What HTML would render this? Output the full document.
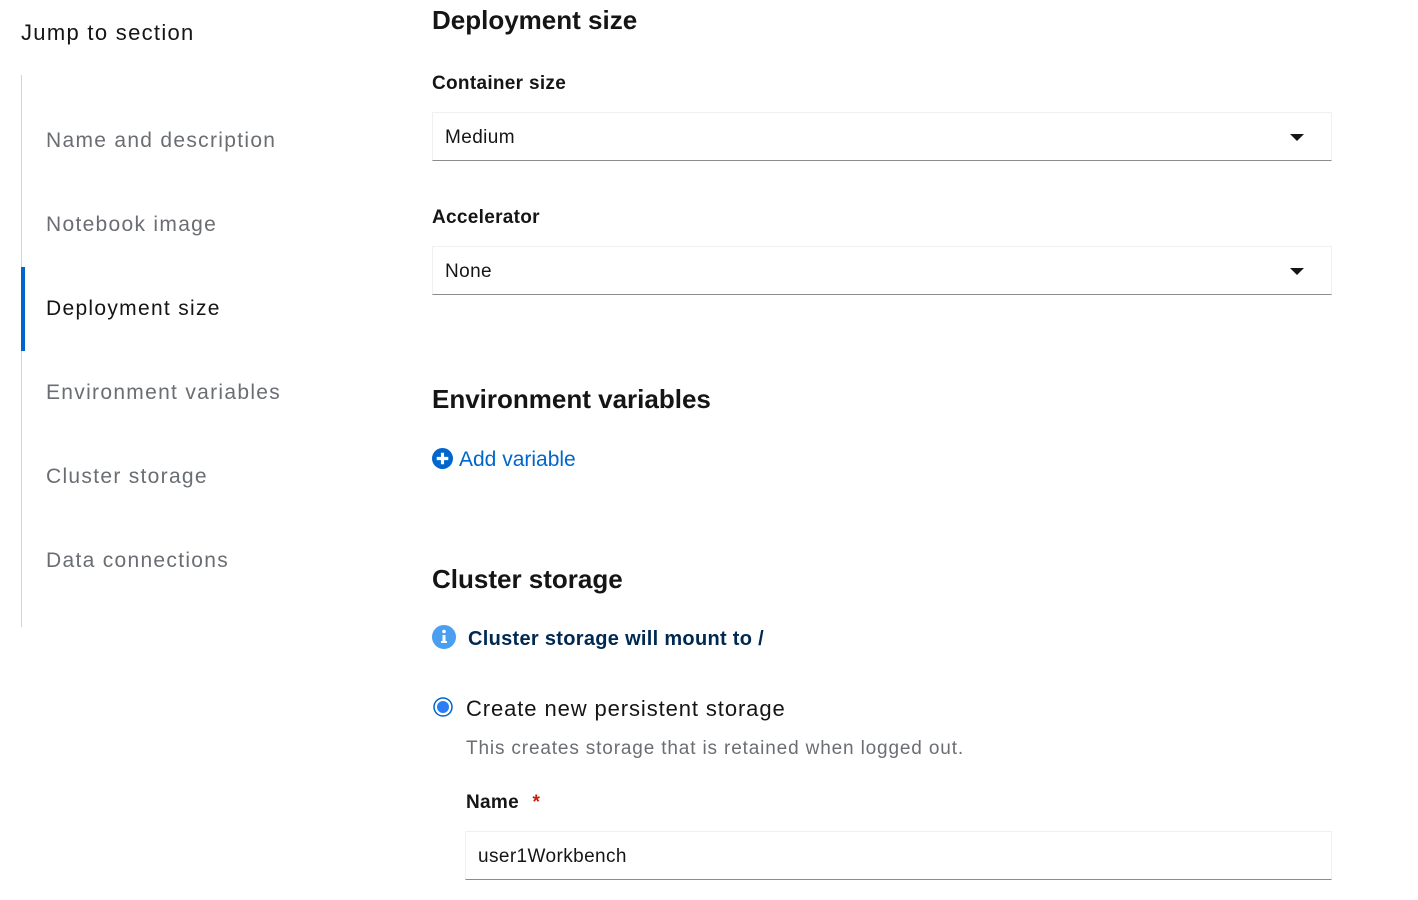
<!DOCTYPE html>
<html><head><style>
*{margin:0;padding:0;box-sizing:border-box}
body{width:1418px;height:900px;background:#fff;font-family:"Liberation Sans",sans-serif;color:#151515;position:relative;overflow:hidden}
.a{position:absolute;white-space:nowrap}
.nav{font-size:21px;color:#6a6e73;letter-spacing:1.3px}
.h2{font-size:26px;font-weight:bold}
.lbl{font-size:19px;font-weight:bold;letter-spacing:0.3px}
.sel{position:absolute;left:432px;width:900px;height:49px;border:1px solid #f0f0f0;border-bottom:1px solid #8a8d90;font-size:19px;padding:14px 0 0 12px;letter-spacing:0.4px}
.car{position:absolute;right:27px;top:21px;width:0;height:0;border-left:7px solid transparent;border-right:7px solid transparent;border-top:7px solid #151515}
</style></head><body>
<div class="a" style="left:21px;top:20px;font-size:22px;letter-spacing:1.3px">Jump to section</div>
<div class="a" style="left:21px;top:75px;width:1px;height:552px;background:#d2d2d2"></div>
<div class="a" style="left:21px;top:267px;width:4px;height:84px;background:#0066cc"></div>
<div class="a nav" style="left:46px;top:129px">Name and description</div>
<div class="a nav" style="left:46px;top:213px">Notebook image</div>
<div class="a nav" style="left:46px;top:297px;color:#151515">Deployment size</div>
<div class="a nav" style="left:46px;top:381px">Environment variables</div>
<div class="a nav" style="left:46px;top:465px">Cluster storage</div>
<div class="a nav" style="left:46px;top:549px">Data connections</div>

<div class="a h2" style="left:432px;top:5px">Deployment size</div>
<div class="a lbl" style="left:432px;top:73px">Container size</div>
<div class="sel" style="top:112px">Medium<div class="car"></div></div>
<div class="a lbl" style="left:432px;top:207px">Accelerator</div>
<div class="sel" style="top:246px">None<div class="car"></div></div>

<div class="a h2" style="left:432px;top:384px">Environment variables</div>
<svg class="a" style="left:432px;top:448px" width="21" height="21" viewBox="0 0 20 20"><circle cx="10" cy="10" r="10" fill="#0066cc"/><path d="M10 4.5v11M4.5 10h11" stroke="#fff" stroke-width="3"/></svg>
<div class="a" style="left:459px;top:448px;font-size:21px;color:#0066cc">Add variable</div>

<div class="a h2" style="left:432px;top:564px">Cluster storage</div>
<svg class="a" style="left:432px;top:625px" width="24" height="24" viewBox="0 0 24 24"><circle cx="12" cy="12" r="12" fill="#4a9ff0"/><rect x="10.5" y="10" width="3" height="8" fill="#fff"/><rect x="9" y="16" width="6" height="2" fill="#fff"/><circle cx="12" cy="6.5" r="1.8" fill="#fff"/></svg>
<div class="a" style="left:468px;top:628px;font-size:20px;font-weight:bold;color:#002952;letter-spacing:0.3px">Cluster storage will mount to /</div>
<svg class="a" style="left:433px;top:697px" width="20" height="20" viewBox="0 0 20 20"><circle cx="10" cy="10" r="9" fill="#fff" stroke="#0066cc" stroke-width="1.5"/><circle cx="10" cy="10" r="6" fill="#2b7df5"/></svg>
<div class="a" style="left:466px;top:696px;font-size:22px;letter-spacing:0.9px">Create new persistent storage</div>
<div class="a" style="left:466px;top:738px;font-size:19px;color:#6a6e73;letter-spacing:0.85px">This creates storage that is retained when logged out.</div>
<div class="a lbl" style="left:466px;top:792px">Name <span style="color:#c9190b;margin-left:8px">*</span></div>
<div class="sel" style="left:465px;width:867px;top:831px">user1Workbench</div>
</body></html>
